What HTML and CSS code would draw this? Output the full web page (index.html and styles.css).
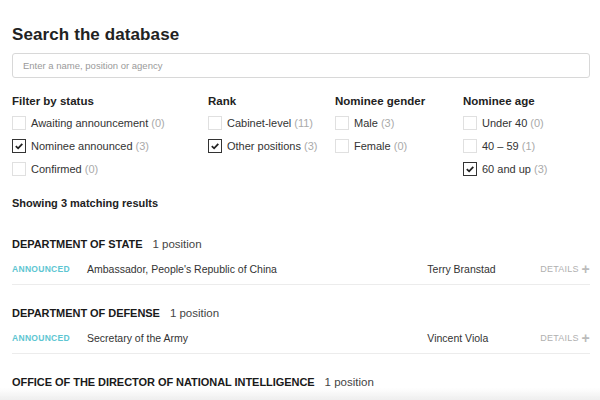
FILE: index.html
```html
<!DOCTYPE html>
<html>
<head>
<meta charset="utf-8">
<link rel="stylesheet" href="styles.css">
</head>
<body>
<div class="page">
  <h1 class="title">Search the database</h1>
  <div class="search">Enter a name, position or agency</div>

  <div class="filters">
    <div class="col col-status">
      <div class="fhead">Filter by status</div>
      <div class="opt"><span class="box"></span>Awaiting announcement <span class="cnt">(0)</span></div>
      <div class="opt"><span class="box on"><svg viewBox="0 0 12 12" width="12" height="12"><path d="M2.8 6.2 L5.1 8.3 L9.3 3.8" fill="none" stroke="#222" stroke-width="1.8"/></svg></span>Nominee announced <span class="cnt">(3)</span></div>
      <div class="opt"><span class="box"></span>Confirmed <span class="cnt">(0)</span></div>
    </div>
    <div class="col col-rank">
      <div class="fhead">Rank</div>
      <div class="opt"><span class="box"></span>Cabinet-level <span class="cnt">(11)</span></div>
      <div class="opt"><span class="box on"><svg viewBox="0 0 12 12" width="12" height="12"><path d="M2.8 6.2 L5.1 8.3 L9.3 3.8" fill="none" stroke="#222" stroke-width="1.8"/></svg></span>Other positions <span class="cnt">(3)</span></div>
    </div>
    <div class="col col-gender">
      <div class="fhead">Nominee gender</div>
      <div class="opt"><span class="box"></span>Male <span class="cnt">(3)</span></div>
      <div class="opt"><span class="box"></span>Female <span class="cnt">(0)</span></div>
    </div>
    <div class="col col-age">
      <div class="fhead">Nominee age</div>
      <div class="opt"><span class="box"></span>Under 40 <span class="cnt">(0)</span></div>
      <div class="opt"><span class="box"></span>40 – 59 <span class="cnt">(1)</span></div>
      <div class="opt"><span class="box on"><svg viewBox="0 0 12 12" width="12" height="12"><path d="M2.8 6.2 L5.1 8.3 L9.3 3.8" fill="none" stroke="#222" stroke-width="1.8"/></svg></span>60 and up <span class="cnt">(3)</span></div>
    </div>
  </div>

  <div class="showing">Showing 3 matching results</div>

  <div class="group">
    <div class="ghead"><span class="agency">DEPARTMENT OF STATE</span><span class="npos">1 position</span></div>
    <div class="row">
      <span class="status">ANNOUNCED</span>
      <span class="pos">Ambassador, People's Republic of China</span>
      <span class="name">Terry Branstad</span>
      <span class="details">DETAILS <b class="plus">+</b></span>
    </div>
  </div>

  <div class="group">
    <div class="ghead"><span class="agency">DEPARTMENT OF DEFENSE</span><span class="npos">1 position</span></div>
    <div class="row">
      <span class="status">ANNOUNCED</span>
      <span class="pos">Secretary of the Army</span>
      <span class="name">Vincent Viola</span>
      <span class="details">DETAILS <b class="plus">+</b></span>
    </div>
  </div>

  <div class="group">
    <div class="ghead"><span class="agency">OFFICE OF THE DIRECTOR OF NATIONAL INTELLIGENCE</span><span class="npos">1 position</span></div>
  </div>
</div>
<div class="fade"></div>
</body>
</html>
```

FILE: styles.css
```css
html, body {
  margin: 0;
  padding: 0;
  background: #fff;
}
body {
  font-family: "Liberation Sans", Arial, sans-serif;
  color: #222;
  overflow: hidden;
  height: 400px;
}
.page {
  padding: 0 10px 0 12px;
}
.title {
  margin: 0;
  padding-top: 25px;
  font-size: 17px;
  line-height: 20px;
  font-weight: bold;
  color: #222;
  letter-spacing: 0.1px;
}
.search {
  margin-top: 8px;
  height: 23px;
  border: 1px solid #d8d8d8;
  border-radius: 3px;
  font-size: 9.5px;
  line-height: 23px;
  color: #9a9a9a;
  padding-left: 10px;
}
.filters {
  display: flex;
  margin-top: 16px;
}
.col-status { width: 196px; }
.col-rank { width: 127px; }
.col-gender { width: 128px; }
.col-age { flex: 1; }
.fhead {
  font-size: 11.5px;
  font-weight: bold;
  line-height: 14px;
  margin-bottom: 3px;
}
.opt {
  display: flex;
  align-items: center;
  height: 23px;
  font-size: 11px;
  color: #333;
  white-space: pre;
}
.cnt {
  color: #aaa;
}
.box {
  width: 12px;
  height: 12px;
  border: 1px solid #e0e0e0;
  margin-right: 5px;
  display: inline-flex;
  align-items: center;
  justify-content: center;
  flex: none;
}
.box.on {
  border-color: #333;
}
.box svg {
  width: 12px;
  height: 12px;
}
.showing {
  margin-top: 16px;
  font-size: 11px;
  font-weight: bold;
  line-height: 14px;
}
.group {
  margin-top: 26px;
}
.group + .group {
  margin-top: 20px;
}
.ghead {
  display: flex;
  align-items: baseline;
  line-height: 16px;
}
.agency {
  font-size: 11px;
  font-weight: bold;
  color: #1a1a1a;
  letter-spacing: -0.05px;
  margin-right: 10px;
}
.npos {
  font-size: 11.5px;
  color: #444;
}
.row {
  display: flex;
  align-items: center;
  height: 22px;
  margin-top: 6px;
  padding-bottom: 4px;
  border-bottom: 1px solid #ececec;
  font-size: 10.5px;
  color: #333;
}
.status {
  width: 75px;
  font-size: 8.5px;
  font-weight: bold;
  color: #5ec6d2;
  letter-spacing: 0.3px;
}
.pos {
  flex: 1;
}
.name {
  width: 113px;
}
.details {
  font-size: 9px;
  color: #b0b0b0;
  letter-spacing: 0.2px;
  display: flex;
  align-items: center;
}
.plus {
  font-size: 14px;
  color: #bbb;
  margin-left: 3px;
  line-height: 10px;
}
.fade {
  position: fixed;
  left: 0;
  right: 0;
  bottom: 0;
  height: 12px;
  background: linear-gradient(to bottom, rgba(240,240,240,0), rgba(238,238,238,1));
}
```
